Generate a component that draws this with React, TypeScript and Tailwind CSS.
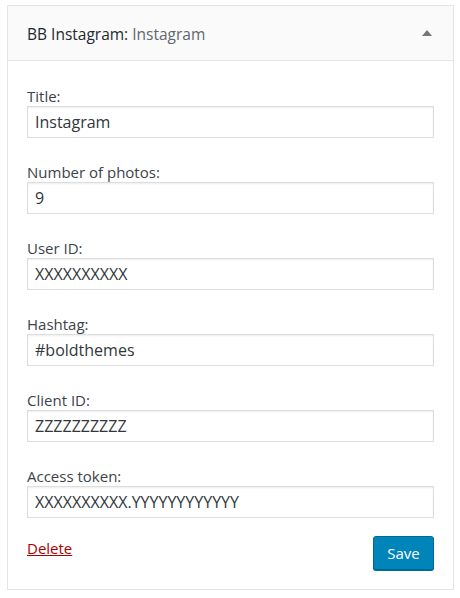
const fields = [
  { label: "Title:", value: "Instagram" },
  { label: "Number of photos:", value: "9" },
  { label: "User ID:", value: "XXXXXXXXXX" },
  { label: "Hashtag:", value: "#boldthemes" },
  { label: "Client ID:", value: "ZZZZZZZZZZ" },
  { label: "Access token:", value: "XXXXXXXXXX.YYYYYYYYYYYY" },
];

export default function App() {
  return (
    <div className="min-h-[598px] bg-white pl-[7px] pt-[5px] font-['Open_Sans',sans-serif]">
      <div className="w-[447px] border border-[#e5e5e5] bg-white">
        {/* header */}
        <div className="flex h-[55px] items-center justify-between border-b border-[#e5e5e5] bg-[#fafafa] pl-[19px] pr-[21px] pt-[3px]">
          <h3 className="text-[15.5px] font-normal text-[#23282d]">
            BB Instagram: <span className="text-[#5f676e]">Instagram</span>
          </h3>
          <svg width="10" height="6" viewBox="0 0 10 6" className="mb-[3px]">
            <path d="M5 0L10 6H0Z" fill="#72777c" />
          </svg>
        </div>

        {/* body */}
        <div className="px-[19px] pb-[19px] pt-[25px]">
          {fields.map((f, i) => (
            <div key={i} className="mb-[24px]">
              <label className="block h-[20px] text-[15px] leading-[20px] text-[#3c434a]">{f.label}</label>
              <input
                readOnly
                value={f.value}
                className="block h-[32px] w-[407px] border border-[#dddddd] bg-white px-[7px] text-[16px] text-[#32373c] shadow-[inset_0_1px_2px_rgba(0,0,0,0.07)] outline-none"
              />
            </div>
          ))}
          <div className="-mt-[6px] flex items-start justify-between">
            <a href="#" className="mt-[2px] text-[15px] leading-[20px] text-[#a00] underline">
              Delete
            </a>
            <button className="h-[34px] w-[61px] rounded-[3px] border border-[#006799] bg-[#0085ba] text-[15px] text-white shadow-[0_1px_0_#006799]">
              Save
            </button>
          </div>
        </div>
      </div>
    </div>
  );
}
